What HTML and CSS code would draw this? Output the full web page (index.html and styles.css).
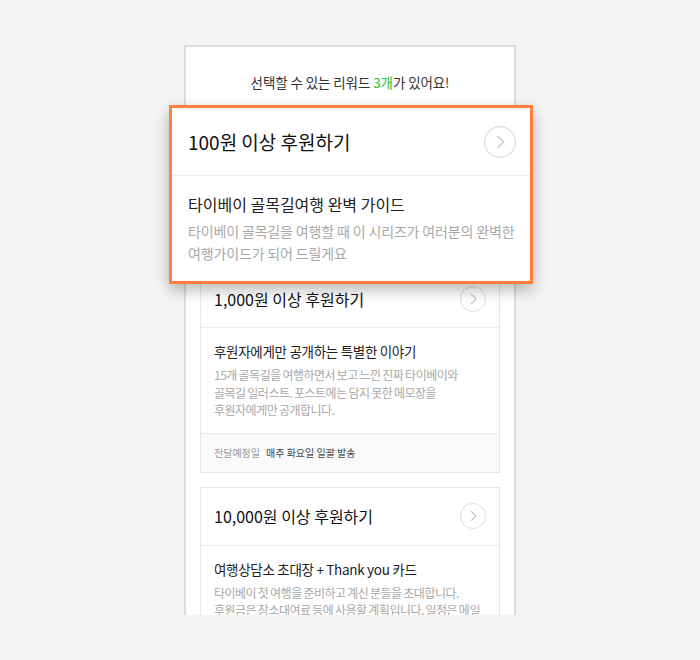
FILE: index.html
```html
<!DOCTYPE html>
<html>
<head>
    <title>리워드 선택</title>
    <link rel="stylesheet" href="styles.css">
</head>
<body>
    <div class="stage">
        <div class="phone">
            <div class="intro">선택할 수 있는 리워드 <span class="count">3개</span>가 있어요!</div>
            <div class="rewards">
                <!-- sits under the zoomed card -->
                <div class="reward reward-first"></div>

                <div class="reward">
                    <div class="reward-head">
                        <span class="reward-title">1,000원 이상 후원하기</span>
                        <svg class="arrow" width="26" height="26" viewBox="0 0 26 26">
                            <circle cx="13" cy="13" r="12.5" fill="none" stroke="#dcdcdc"/>
                            <path d="M11 8 L16 13 L11 18" fill="none" stroke="#c8c8c8" stroke-width="1.2"/>
                        </svg>
                    </div>
                    <div class="reward-body">
                        <div class="reward-name">후원자에게만 공개하는 특별한 이야기</div>
                        <div class="reward-desc">15개 골목길을 여행하면서 보고 느낀 진짜 타이베이와 골목길 일러스트. 포스트에는 담지 못한 메모장을 후원자에게만 공개합니다.</div>
                    </div>
                    <div class="reward-foot">
                        <span class="foot-label">전달예정일</span>
                        <span class="foot-value">매주 화요일 일괄 발송</span>
                    </div>
                </div>

                <div class="reward">
                    <div class="reward-head">
                        <span class="reward-title">10,000원 이상 후원하기</span>
                        <svg class="arrow" width="26" height="26" viewBox="0 0 26 26">
                            <circle cx="13" cy="13" r="12.5" fill="none" stroke="#dcdcdc"/>
                            <path d="M11 8 L16 13 L11 18" fill="none" stroke="#c8c8c8" stroke-width="1.2"/>
                        </svg>
                    </div>
                    <div class="reward-body">
                        <div class="reward-name">여행상담소 초대장 + Thank you 카드</div>
                        <div class="reward-desc">타이베이 첫 여행을 준비하고 계신 분들을 초대합니다. 후원금은 장소대여료 등에 사용할 계획입니다. 일정은 메일</div>
                    </div>
                </div>
            </div>
        </div>

        <!-- zoomed view of the first reward -->
        <div class="zoom-card">
            <div class="zoom-head">
                <span class="zoom-title">100원 이상 후원하기</span>
                <svg width="32" height="32" viewBox="0 0 32 32">
                    <circle cx="16" cy="16" r="15.3" fill="none" stroke="#dcdcdc" stroke-width="1.2"/>
                    <path d="M13.5 10 L19.5 16 L13.5 22" fill="none" stroke="#c8c8c8" stroke-width="1.4"/>
                </svg>
            </div>
            <div class="zoom-body">
                <div class="zoom-name">타이베이 골목길여행 완벽 가이드</div>
                <div class="zoom-desc">타이베이 골목길을 여행할 때 이 시리즈가 여러분의 완벽한<br>여행가이드가 되어 드릴게요</div>
            </div>
        </div>
    </div>
</body>
</html>
```

FILE: styles.css
```css
/* reward picker preview */
body {
    margin: 0;
    background-color: #f4f4f4;
    font-family: "Noto Sans CJK KR", "Noto Sans", sans-serif;
    color: #222;
    word-break: keep-all;
}

.stage {
    position: relative;
    width: 700px;
    height: 660px;
    padding-top: 45px;
    box-sizing: border-box;
}

.phone {
    width: 332px;
    height: 570px;
    margin: 0 auto;
    box-sizing: border-box;
    border: 2px solid #dcdcdc;
    border-bottom: none;
    background-color: #fff;
    overflow: hidden;
}

.intro {
    padding: 25px 0 15px;
    line-height: 20px;
    font-size: 13.5px;
    letter-spacing: -0.1px;
    text-align: center;
    color: #333;
}

.count {
    color: #2cc12c;
}

.rewards {
    padding: 0 14px;
}

.reward {
    border: 1px solid #e6e6e6;
    margin-bottom: 14px;
}

.reward-first {
    height: 146px;
}

.reward-head {
    display: flex;
    align-items: center;
    justify-content: space-between;
    height: 57px;
    padding: 0 13px;
    border-bottom: 1px solid #ececec;
}

.reward-title {
    font-size: 16px;
    color: #111;
}

.arrow {
    display: block;
}

.reward-body {
    padding: 13px 13px 14px;
}

.reward-name {
    font-size: 13.5px;
    letter-spacing: -0.3px;
    line-height: 20px;
    color: #222;
    margin-bottom: 5px;
}

.reward-desc {
    font-size: 12px;
    letter-spacing: -0.5px;
    word-spacing: -0.5px;
    line-height: 17.5px;
    color: #a8a8a8;
}

.reward-foot {
    display: flex;
    gap: 6px;
    align-items: center;
    height: 38px;
    padding: 0 13px;
    border-top: 1px solid #ececec;
    background-color: #fafafa;
    font-size: 10px;
}

.foot-label {
    color: #999;
}

.foot-value {
    color: #444;
}

.zoom-card {
    position: absolute;
    left: 169px;
    top: 105px;
    width: 364px;
    height: 179px;
    box-sizing: border-box;
    border: 3px solid #ff7f3e;
    background-color: #fff;
    box-shadow: 0 6px 14px rgba(0, 0, 0, 0.28);
}

.zoom-head {
    display: flex;
    align-items: center;
    justify-content: space-between;
    height: 67px;
    padding: 0 14px 0 16px;
    border-bottom: 1px solid #eeeeee;
}

.zoom-title {
    font-size: 19px;
    color: #111;
}

.zoom-head svg {
    display: block;
}

.zoom-body {
    padding: 16px 16px 0;
}

.zoom-name {
    font-size: 16px;
    line-height: 24px;
    color: #222;
    margin-bottom: 4px;
}

.zoom-desc {
    font-size: 14px;
    letter-spacing: -0.15px;
    line-height: 22px;
    color: #a8a8a8;
    white-space: nowrap;
}
```
